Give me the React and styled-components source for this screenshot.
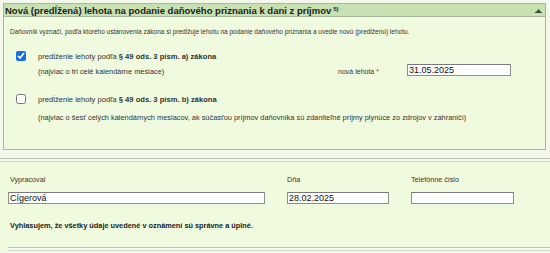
import React from "react";
import styled, { createGlobalStyle } from "styled-components";

const Global = createGlobalStyle`
  html, body { margin: 0; padding: 0; background: #f3f8ea; }
  body { font-family: "Liberation Sans", Arial, sans-serif; color: #222; }
  * { box-sizing: border-box; }
`;

const Page = styled.div`
  width: 550px;
  height: 253px;
  overflow: hidden;
  background: #f3f8ea;
  padding-top: 3px;
`;

const Panel = styled.section`
  margin: 0 4px 0 3px;
  border: 1px solid #a9b79f;
  background: #effadf;
`;

const PanelHeader = styled.header`
  display: flex;
  align-items: center;
  justify-content: space-between;
  height: 13px;
  padding: 0 3px 0 1px;
  background: #c7e1b3;
  border-bottom: 1px solid #a9b79f;
  font-family: "Liberation Sans", Arial, sans-serif;
  font-weight: bold;
  font-size: 9.5px;
  color: #1d1d1d;
  white-space: nowrap;
`;

const Sup = styled.sup`
  font-size: 6px;
  vertical-align: 3px;
  margin-left: 2px;
`;

const PanelBody = styled.div`
  padding: 10px 34px 27px 6px;
`;

const Note = styled.p`
  margin: 0;
  font-size: 6.5px;
  line-height: 10px;
  color: #333;
`;

const OptionRow = styled.label`
  display: flex;
  align-items: center;
  gap: 12px;
  height: 12px;
  margin-top: ${(p) => p.$top}px;
  padding-left: 6px;
  font-size: 7.6px;
  color: #333;
`;

const Check = styled.input.attrs({ type: "checkbox" })`
  width: 10px;
  height: 10px;
  margin: 0;
  accent-color: #1a6fe0;
`;

const SubRow = styled.div`
  display: grid;
  grid-template-columns: 1fr auto 104px;
  column-gap: 28px;
  align-items: center;
  height: 12px;
  margin-top: ${(p) => p.$top}px;
  padding-left: 28px;
  font-size: 7.4px;
  color: #333;
`;

const SubText = styled.span`
  padding-top: 2px;
  white-space: nowrap;
`;

const FieldLabel = styled.span`
  padding-top: 2px;
  white-space: nowrap;
  font-size: 7px;
`;

const Required = styled.span`
  color: #e0201c;
  margin-left: 2px;
`;

const TextInput = styled.input`
  width: 100%;
  height: 12px;
  margin: 0;
  padding: 0 1px;
  border: 1px solid #8f8f8f;
  border-top-color: #7a7a7a;
  background: #fff;
  font-family: "Liberation Sans", Arial, sans-serif;
  font-size: 9px;
  line-height: 10px;
  color: #111;
  outline: none;
`;

const Divider = styled.div`
  height: 4px;
  margin-top: ${(p) => p.$top}px;
  border-top: 1px solid #bcc3b3;
  border-bottom: 1px solid #d1d6c9;
  background: #f5f9ef;
`;

const Section = styled.section`
  background: #effadf;
  padding: 13px 0 0 8px;
`;

const Fields = styled.div`
  display: grid;
  grid-template-columns: 257px 102px 103px;
  column-gap: 22px;
  row-gap: 7px;
  font-size: 7.2px;
  color: #333;
`;

const Label = styled.span`
  line-height: 10px;
  padding-left: ${(p) => p.$indent || 0}px;
  white-space: nowrap;
`;

const Declaration = styled.p`
  margin: 17px 0 0 2px;
  font-size: 7.35px;
  font-weight: bold;
  line-height: 10px;
  color: #222;
`;

const Caret = () => (
  <svg width="7" height="5" viewBox="0 0 7 5" aria-hidden="true">
    <path d="M0.5 4.5 L3.5 1 L6.5 4.5 Z" fill="#3a4a3a" />
    <rect x="0" y="4" width="7" height="1" fill="#3a4a3a" />
  </svg>
);

export default function App() {
  return (
    <>
      <Global />
      <Page>
        <Panel>
          <PanelHeader>
            <span>
              Nová (predĺžená) lehota na podanie daňového priznania k dani z príjmov
              <Sup>5)</Sup>
            </span>
            <Caret />
          </PanelHeader>
          <PanelBody>
            <Note>
              Daňovník vyznačí, podľa ktorého ustanovenia zákona si predĺžuje lehotu na podanie daňového priznania a uvedie novú (predĺženú) lehotu.
            </Note>
            <OptionRow $top={13}>
              <Check defaultChecked />
              <span>
                predĺženie lehoty podľa <b>§ 49 ods. 3 písm. a) zákona</b>
              </span>
            </OptionRow>
            <SubRow $top={2}>
              <SubText>(najviac o tri celé kalendárne mesiace)</SubText>
              <FieldLabel>
                nová lehota<Required>*</Required>
              </FieldLabel>
              <TextInput defaultValue="31.05.2025" />
            </SubRow>
            <OptionRow $top={17}>
              <Check />
              <span>
                predĺženie lehoty podľa <b>§ 49 ods. 3 písm. b) zákona</b>
              </span>
            </OptionRow>
            <SubRow $top={5}>
              <SubText>
                (najviac o šesť celých kalendárnych mesiacov, ak súčasťou príjmov daňovníka sú zdaniteľné príjmy plynúce zo zdrojov v zahraničí)
              </SubText>
            </SubRow>
          </PanelBody>
        </Panel>
        <Divider $top={8} />
        <Section>
          <Fields>
            <Label $indent={2}>Vypracoval</Label>
            <Label>Dňa</Label>
            <Label>Telefónne číslo</Label>
            <TextInput defaultValue="Cígerová" />
            <TextInput defaultValue="28.02.2025" />
            <TextInput defaultValue="" />
          </Fields>
          <Declaration>
            Vyhlasujem, že všetky údaje uvedené v oznámení sú správne a úplné.
          </Declaration>
          <Divider $top={16} />
        </Section>
      </Page>
    </>
  );
}
